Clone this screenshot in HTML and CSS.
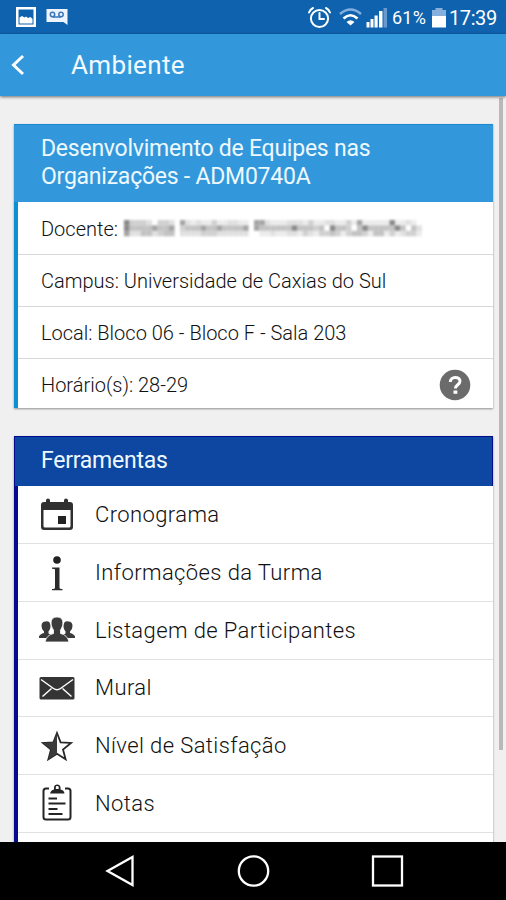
FILE: index.html
```html
<!DOCTYPE html>
<html lang="pt-BR">
<head>
<meta charset="utf-8">
<title>Ambiente</title>
<link rel="stylesheet" href="styles.css">
</head>
<body>
<div class="phone">
  <header class="status">
    <svg class="status-left" width="70" height="34" viewBox="0 0 70 34">
      <path fill="#fff" fill-rule="evenodd" d="M16 7h20v20H16zM18.500 9.500v15h15v-15z"/>
      <path fill="#fff" d="M19.500 23.500v-6l2.500-1.500 2.500 1.500 1.500-1 2 1.500 2.500-1 2 2v4.500z"/>
      <path fill="#eef4ff" d="M46.500 9h21v16l-4-3h-17z"/>
      <g fill="none" stroke="#3976b8" stroke-width="1.500"><circle cx="52.500" cy="14.500" r="2.200"/><circle cx="61" cy="14.500" r="2.200"/><path d="M52.500 17H61"/></g>
    </svg>
    <div class="status-right">
      <svg width="82" height="34" viewBox="306 0 82 34">
        <g fill="none" stroke="#fff" stroke-width="2"><circle cx="319.500" cy="18.500" r="8.600"/><path d="M319.500 13v6h4.500M309 12.500q1-3 4-4.500M330 12.500q-1-3-4-4.500" stroke-linecap="round"/></g>
        <g fill="none" stroke-width="2.600"><path stroke="#84b0df" d="M340 14q10.500-9 21 0"/><path stroke="#fff" d="M343.500 18.500q7-6.500 14 0"/></g><path fill="#fff" d="M346.500 22q4-3.500 8 0l-4 3.500z"/>
        <path fill="#fff" d="M366.500 22h3v5.500h-3zM370.500 19h3v8.500h-3zM374.500 15.500h3.200v12h-3.200zM379 11h3.500v16.500H379z"/><path fill="#6999cf" d="M383.500 8h3.500v19.500h-3.500z"/>
      </svg>
      <span class="percent">61%</span>
      <svg class="battery" width="14" height="34" viewBox="0 0 14 34"><path fill="#87afdc" d="M0 10h3.500V8h7v2H14v7H0z"/><path fill="#fff" d="M0 16h14v11.500H0z"/></svg>
      <span class="clock">17:39</span>
    </div>
  </header>
  <nav class="appbar">
    <svg width="16" height="24" viewBox="0 0 16 24"><path d="M14 3 4.500 12l9.500 9" fill="none" stroke="#fff" stroke-width="3"/></svg>
    <h1>Ambiente</h1>
  </nav>
  <main class="content">
    <section class="card card-info">
      <h2>Desenvolvimento de Equipes nas<br>Organizações - ADM0740A</h2>
      <div class="row first"><span>Docente:</span><span class="mask" id="mask"></span></div>
      <div class="row"><span>Campus: Universidade de Caxias do Sul</span></div>
      <div class="row"><span>Local: Bloco 06 - Bloco F - Sala 203</span></div>
      <div class="row last"><span>Horário(s): 28-29</span>
        <svg class="help" width="32" height="32" viewBox="0 0 32 32"><circle cx="16" cy="16" r="15.300" fill="#6b6b6b"/><path d="M11.300 13c0-6 9.700-6 9.700-.8 0 3.600-4.600 3.500-4.600 7.300" fill="none" stroke="#fff" stroke-width="3"/><path fill="#fff" d="M14.500 21.500h3.800v3.300h-3.800z"/></svg>
      </div>
    </section>
    <section class="card card-tools">
      <h2>Ferramentas</h2>
      <div class="tool"><svg class="ico" viewBox="0 0 40 40"><path fill="#303030" fill-rule="evenodd" d="M9 7V5.500a2 2 0 0 1 4 0V7h14V5.500a2 2 0 0 1 4 0V7h2q3 0 3 3v22q0 3-3 3H7q-3 0-3-3V10q0-3 3-3zM6.500 15v16q0 1.500 1.500 1.500h24q1.500 0 1.500-1.500V15z"/><path fill="#222" d="M21 21h8v8h-8z"/></svg><span>Cronograma</span></div>
      <div class="tool"><svg class="ico" viewBox="0 0 40 40"><circle cx="20" cy="7" r="3.800" fill="#222"/><path fill="#2c2c2c" d="M15 14.500h7.500V34.500q0 1.500 3 1.500v1.300H15V36q3 0 3-1.500V16.500q0-.8-3-.8z"/></svg><span>Informações da Turma</span></div>
      <div class="tool"><svg class="ico" viewBox="0 0 40 40"><g fill="#3b3b3b"><path d="M8.500 11.500q5-1 5 5 0 3-2 5v2l3 1.500-4 3H2v-1.500q1-2.500 5-3.500v-1.500q-2.500-2-2.500-5.500 0-4.500 4-4.500zM31.500 11.500q-5-1-5 5 0 3 2 5v2l-3 1.500 4 3H38v-1.500q-1-2.500-5-3.500v-1.500q2.500-2 2.500-5.500 0-4.500-4-4.500z"/><path stroke="#fff" stroke-width=".8" d="M20 7c8 0 6.500 9 3.500 13v3.500q7 1.500 8.500 8.500H8q1.500-7 8.500-8.500V20c-3-4-4.500-13 3.500-13z"/></g></svg><span>Listagem de Participantes</span></div>
      <div class="tool"><svg class="ico" viewBox="0 0 40 40"><rect x="2.500" y="9" width="35" height="22.500" rx="1.500" fill="#343434"/><path d="m4 11.500 12.500 9q3.500 2.500 7 0l12.500-9M5.500 28.500l9-8M34.500 28.500l-9-8" fill="none" stroke="#fff" stroke-width="1.500"/></svg><span>Mural</span></div>
      <div class="tool"><svg class="ico" viewBox="0 0 40 40"><path d="m20 7 3.600 9.300 10.400.6-8 6.600 2.600 9.800L20 27.800l-8.600 5.500 2.600-9.800-8-6.600 10.400-.6z" fill="#fff" stroke="#282828" stroke-width="1.800"/><path fill="#3b3b3b" d="M20 7v20.800l-8.600 5.500 2.600-9.800-8-6.600 10.400-.6z"/></svg><span>Nível de Satisfação</span></div>
      <div class="tool"><svg class="ico" viewBox="0 0 40 40"><path d="M12 5.500H9q-2.500 0-2.500 2.500v26q0 2.500 2.500 2.500h22q2.500 0 2.500-2.500V8q0-2.500-2.500-2.500h-3" fill="none" stroke="#242424" stroke-width="2"/><path fill="#242424" fill-rule="evenodd" d="M13 10.500q1-3.500 4-4v-2c0-4 6.500-4 6.500 0v2q3.500.5 4 4zM18.800 6h2.900V4c0-1.500-2.900-1.500-2.900 0z"/><path d="M11.500 15.500H20M11.500 20.500h17M11.500 26h9M11.500 31h14" stroke="#242424" stroke-width="2"/></svg><span>Notas</span></div>
    </section>
    <i class="scrollbar"></i>
  </main>
  <footer class="navbar">
    <svg width="506" height="58" viewBox="0 842 506 58"><g fill="none" stroke="#fff" stroke-width="2.300"><path d="M132.500 857v28L107.500 871z"/><circle cx="253.500" cy="871" r="14.700"/><rect x="373" y="856.500" width="29" height="29"/></g></svg>
  </footer>
</div>
<script src="mask.js"></script>
</body>
</html>
```
FILE: styles.css
```css
* { box-sizing: border-box; }
body { margin: 0; font-family: Roboto, "Liberation Sans", sans-serif; }
.phone { width: 506px; height: 900px; display: flex; flex-direction: column; overflow: hidden; background: #f0f0f0; }
span { white-space: nowrap; }
svg { display: block; flex: none; }
.status { height: 34px; flex: none; background: #0f62ad; display: flex; justify-content: space-between; color: #fff; }
.status-right { display: flex; align-items: center; width: 200px; line-height: 34px; padding-top: 2px; }
.status-right svg { margin-top: -2px; }
.percent { width: 40px; margin-left: 4px; font-size: 18px; letter-spacing: .2px; }
.battery { margin-right: 3px; }
.clock { font-size: 20px; letter-spacing: -.4px; }
.appbar { height: 62px; flex: none; background: #3398db; display: flex; align-items: center; padding-left: 9px; box-shadow: 0 1px 3px rgba(0,0,0,.55); z-index: 1; }
.appbar h1 { margin: 0 0 0 46px; font-size: 26px; font-weight: 400; letter-spacing: .35px; color: #f2faff; }
.content { flex: 1; min-height: 0; overflow: hidden; padding: 28px 13px 0 14px; position: relative; }
.card { background: #fff; border-left: 4px solid #0d8fd8; box-shadow: 0 1px 2px rgba(0,0,0,.4); }
.card h2 { margin: 0 0 0 -4px; padding-left: 27px; font-weight: 400; font-size: 23px; line-height: 28px; letter-spacing: -.24px; color: #eef9ff; }
.card-info h2 { height: 78px; padding-top: 10px; background: #3398db; border-top: 1px solid #1889d2; }
.row { height: 52px; padding-left: 23px; border-bottom: 1.5px solid #d8d8d8; display: flex; align-items: center; font-size: 20px; font-weight: 300; color: #111; }
.row.first { height: 53px; padding-top: 1px; }
.row.last { height: 49px; padding-top: 3px; border: 0; padding-right: 22px; justify-content: space-between; }
.mask { width: 298px; height: 17px; margin-left: 6px; filter: blur(.8px); }
.card-tools { margin-top: 28px; border-color: #030c8d; }
.card-tools h2 { height: 50px; background: #0d47a1; border: 1.5px solid #030c8d; border-bottom: 0; padding-left: 26px; line-height: 48px; }
.tool { height: 57.7px; display: flex; align-items: center; padding-left: 19px; border-bottom: 1.5px solid #dfe1e3; font-size: 22px; font-weight: 300; letter-spacing: .4px; color: #111; }
.tool:nth-of-type(1) { height: 58.2px; }
.ico { width: 40px; height: 40px; margin-right: 18px; }
.card-tools::after { content: ""; display: block; height: 30px; }
.scrollbar { position: absolute; right: 3px; top: 2px; width: 4px; height: 652px; background: #b9b9b9; }
.navbar { height: 58px; flex: none; background: #000; }
```
FILE: mask.js
```js
const words = [
  { x: 0, w: 50.5, rows: ["633320332", "644445445", "522442344"] },
  { x: 56, w: 68.5, rows: ["5212113112211", "3444544544445", "2222333222222"] },
  { x: 130, w: 168, rows: ["5521112221311221131511111611210", "5444444644434064430464444464042", "0112112213213343134431441312331"] }
];
const tones = ["#fff", "#ececec", "#e0e0e0", "#d0d0d0", "#c2c2c2", "#a4a4a4", "#888"];
let cells = "";
for (const { x, w, rows } of words) {
  rows.forEach((row, r) => {
    const step = w / row.length;
    [...row].forEach((tone, c) => {
      cells += `<rect x="${x + c * step}" y="${r * 5.4}" width="${step + 0.1}" height="5.5" fill="${tones[tone]}"/>`;
    });
  });
}
document.getElementById("mask").innerHTML = `<svg width="298" height="17">${cells}</svg>`;
```
